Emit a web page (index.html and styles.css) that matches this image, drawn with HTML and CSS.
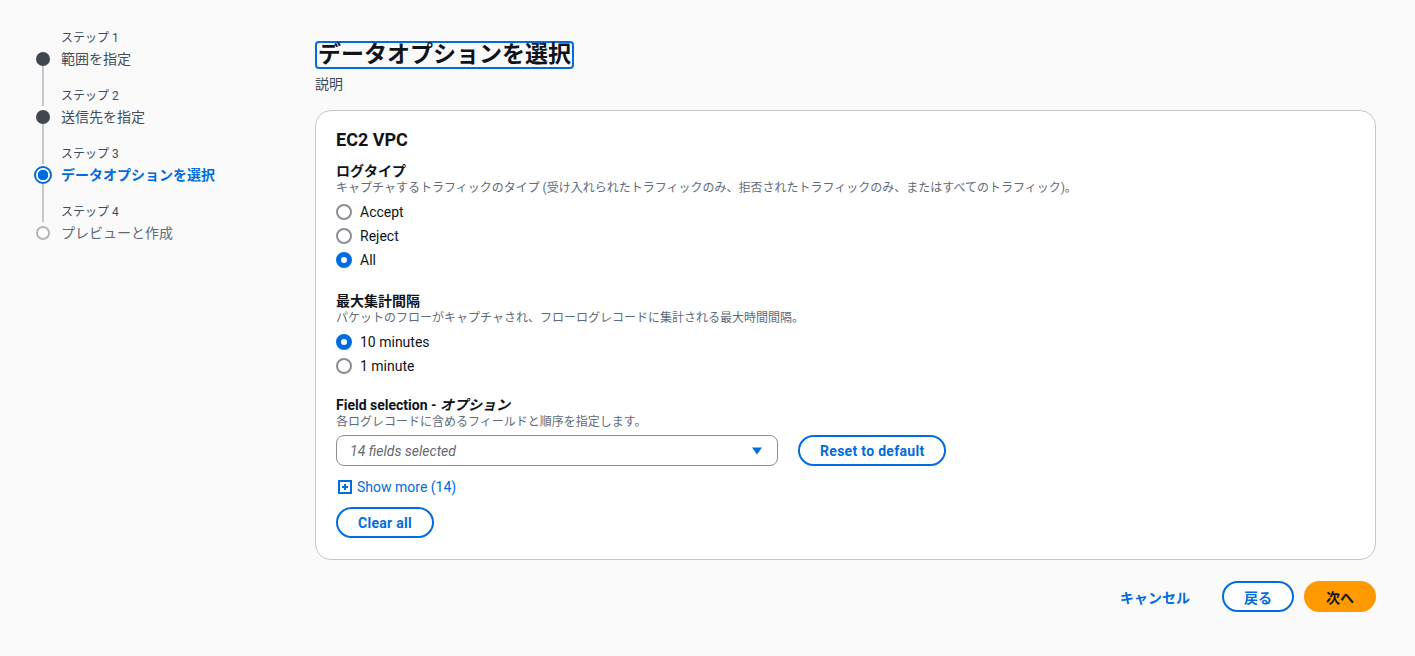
FILE: index.html
```html
<!DOCTYPE html>
<html lang="ja">
<head>
    <meta charset="UTF-8">
    <meta name="viewport" content="width=device-width, initial-scale=1.0">
    <title>データオプションを選択</title>
    <link rel="stylesheet" href="styles.css">
</head>
<body>
    <div class="page">
        <nav class="steps">
            <div class="step done">
                <div class="step-label">ステップ 1</div>
                <div class="step-marker"><span class="dot"></span><span class="line"></span></div>
                <div class="step-title">範囲を指定</div>
            </div>
            <div class="step done">
                <span class="line top"></span>
                <div class="step-label">ステップ 2</div>
                <div class="step-marker"><span class="dot"></span><span class="line"></span></div>
                <div class="step-title">送信先を指定</div>
            </div>
            <div class="step active">
                <span class="line top"></span>
                <div class="step-label">ステップ 3</div>
                <div class="step-marker"><span class="dot"></span><span class="line"></span></div>
                <div class="step-title">データオプションを選択</div>
            </div>
            <div class="step todo">
                <span class="line top"></span>
                <div class="step-label">ステップ 4</div>
                <div class="step-marker"><span class="dot"></span></div>
                <div class="step-title">プレビューと作成</div>
            </div>
        </nav>

        <main class="main">
            <div class="page-header">
                <h1 class="page-title">データオプションを選択</h1>
                <p class="page-desc">説明</p>
            </div>

            <section class="card">
                <h2 class="card-title">EC2 VPC</h2>

                <div class="field">
                    <div class="field-label">ログタイプ</div>
                    <div class="field-desc">キャプチャするトラフィックのタイプ (受け入れられたトラフィックのみ、拒否されたトラフィックのみ、またはすべてのトラフィック)。</div>
                    <div class="radio-group">
                        <label class="radio"><span class="radio-circle"></span>Accept</label>
                        <label class="radio"><span class="radio-circle"></span>Reject</label>
                        <label class="radio"><span class="radio-circle checked"></span>All</label>
                    </div>
                </div>

                <div class="field">
                    <div class="field-label">最大集計間隔</div>
                    <div class="field-desc">パケットのフローがキャプチャされ、フローログレコードに集計される最大時間間隔。</div>
                    <div class="radio-group">
                        <label class="radio"><span class="radio-circle checked"></span>10 minutes</label>
                        <label class="radio"><span class="radio-circle"></span>1 minute</label>
                    </div>
                </div>

                <div class="field last">
                    <div class="field-label">Field selection - <i>オプション</i></div>
                    <div class="field-desc">各ログレコードに含めるフィールドと順序を指定します。</div>
                    <div class="select-row">
                        <div class="select">
                            <span class="select-placeholder">14 fields selected</span>
                            <svg width="12" height="12" viewBox="0 0 12 12"><path d="M1 2.5h10L6 9.5z" fill="#006ce0"/></svg>
                        </div>
                        <button class="btn">Reset to default</button>
                    </div>
                    <a class="show-more" href="#">
                        <svg width="14" height="14" viewBox="0 0 14 14"><rect x="1" y="1" width="12" height="12" fill="none" stroke="#006ce0" stroke-width="2"/><path d="M7 4v6M4 7h6" stroke="#006ce0" stroke-width="2"/></svg>
                        Show more (14)
                    </a>
                    <div><button class="btn">Clear all</button></div>
                </div>
            </section>

            <div class="footer">
                <button class="btn link">キャンセル</button>
                <button class="btn">戻る</button>
                <button class="btn primary">次へ</button>
            </div>
        </main>
    </div>
</body>
</html>
```

FILE: styles.css
```css
* {
    box-sizing: border-box;
    margin: 0;
    padding: 0;
}
body {
    font-family: Roboto, "Noto Sans CJK JP", sans-serif;
    background-color: #fafafa;
    color: #0f141a;
    font-size: 14px;
}
.page {
    display: flex;
    padding: 28px 39px 0 35px;
}
.steps {
    width: 280px;
    flex-shrink: 0;
}
.step {
    display: grid;
    grid-template-columns: 16px 1fr;
    grid-template-rows: 20px 22px 16px;
    column-gap: 10px;
}
.step:last-child {
    grid-template-rows: 20px 22px;
}
.step-label {
    grid-column: 2;
    grid-row: 1;
    font-size: 12px;
    line-height: 20px;
    color: #414d5c;
}
.step-title {
    grid-column: 2;
    grid-row: 2;
    line-height: 22px;
    color: #414d5c;
}
.step-marker {
    grid-column: 1;
    grid-row: 2 / 4;
    display: flex;
    flex-direction: column;
    align-items: center;
}
.line {
    width: 2px;
    flex: 1;
    background-color: #c6c6cd;
}
.line.top {
    grid-column: 1;
    grid-row: 1;
    justify-self: center;
}
.dot {
    width: 14px;
    height: 14px;
    margin-top: 4px;
    border-radius: 50%;
    flex-shrink: 0;
}
.done .dot {
    background-color: #424650;
}
.active .dot {
    width: 18px;
    height: 18px;
    margin-top: 2px;
    border: 2px solid #006ce0;
    background: radial-gradient(circle, #006ce0 0 5px, #fff 5.5px);
}
.active .step-title {
    color: #006ce0;
    font-weight: 700;
}
.todo .dot {
    width: 14px;
    height: 14px;
    border: 2px solid #b4b4bb;
    background-color: #fff;
}
.todo .step-title {
    color: #5f6b7a;
}

.main {
    flex: 1;
}
.page-header {
    padding-top: 13px;
    margin-bottom: 16px;
}
.page-title {
    display: inline-block;
    font-size: 23px;
    font-weight: 700;
    line-height: 24px;
    padding: 0 1px;
    border: 2px solid #006ce0;
    border-radius: 4px;
}
.page-desc {
    margin-top: 5px;
    font-size: 14px;
    line-height: 20px;
    color: #424650;
}
.card {
    background-color: #fff;
    border: 1px solid #c6c6cd;
    border-radius: 16px;
    padding: 18px 20px 21px;
}
.card-title {
    font-size: 18px;
    font-weight: 700;
    line-height: 22px;
    margin-bottom: 11px;
}
.field {
    margin-bottom: 20px;
}
.field.last {
    margin-top: -2px;
    margin-bottom: 0;
}
.field-label {
    font-weight: 700;
    line-height: 18px;
}
.field-label i {
    font-weight: 700;
}
.field-desc {
    font-size: 12px;
    line-height: 16px;
    color: #5f6b7a;
    margin-bottom: 4px;
}
.radio-group {
    display: flex;
    flex-direction: column;
}
.radio {
    display: flex;
    align-items: center;
    gap: 8px;
    line-height: 24px;
}
.radio-circle {
    width: 16px;
    height: 16px;
    border: 2px solid #8c8c94;
    border-radius: 50%;
    background-color: #fff;
}
.radio-circle.checked {
    border: 5px solid #006ce0;
}
.select-row {
    display: flex;
    align-items: center;
    gap: 20px;
    margin-top: 5px;
}
.select {
    width: 442px;
    height: 31px;
    display: flex;
    align-items: center;
    justify-content: space-between;
    padding: 0 14px 0 13px;
    border: 1px solid #8c8c94;
    border-radius: 8px;
    background-color: #fff;
}
.select-placeholder {
    font-style: italic;
    color: #656871;
}
.btn {
    font-family: inherit;
    font-size: 14px;
    font-weight: 700;
    letter-spacing: 0.3px;
    height: 31px;
    padding: 0 20px;
    border: 2px solid #006ce0;
    border-radius: 20px;
    background-color: #fff;
    color: #006ce0;
}
.show-more {
    display: inline-flex;
    align-items: center;
    gap: 5px;
    margin: 12px 0 11px 2px;
    color: #006ce0;
    text-decoration: none;
    line-height: 18px;
}
.footer {
    display: flex;
    justify-content: flex-end;
    gap: 10px;
    margin-top: 21px;
}
.footer .btn {
    letter-spacing: 0;
}
.btn.link {
    border-color: transparent;
    background: none;
}
.btn.primary {
    background-color: #ff9900;
    border-color: #ff9900;
    color: #0f141a;
}
```
